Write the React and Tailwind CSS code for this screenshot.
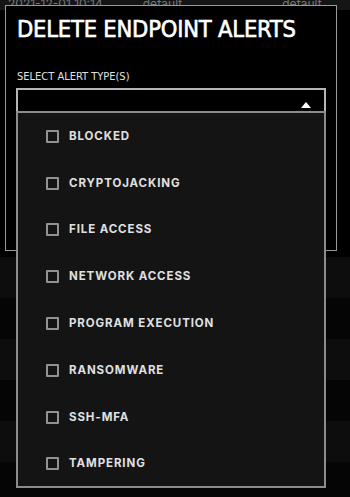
import React from 'react'

const alertTypes = [
  'BLOCKED',
  'CRYPTOJACKING',
  'FILE ACCESS',
  'NETWORK ACCESS',
  'PROGRAM EXECUTION',
  'RANSOMWARE',
  'SSH-MFA',
  'TAMPERING',
]

const bgRows = ['bg-[#0d0d0d]', 'bg-[#050505]', 'bg-[#0d0d0d]', 'bg-[#050505]', 'bg-[#0d0d0d]', 'bg-[#050505]']

export default function App() {
  return (
    <div className="relative w-[350px] h-[497px] overflow-hidden bg-black font-['Inter','Liberation_Sans',sans-serif]">
      {/* table behind the modal */}
      <div className="h-[16px] bg-[#151515] flex items-end gap-[40px] pl-[8px] text-[12px] text-[#777] leading-[12px] -translate-y-[6px]">
        <span>2021-12-01 10:14</span>
        <span>default</span>
        <span className="ml-[60px]">default</span>
      </div>
      <div className="h-[241px]" />
      {bgRows.map((c, i) => (
        <div key={i} className={`h-[41px] ${c}`} />
      ))}

      {/* modal */}
      <div className="absolute left-[5px] top-[5px] w-[332px] h-[246px] bg-black border border-[#9a9a9a]">
        <div className="px-[11px] pt-[9px]">
          <h2 className="whitespace-nowrap text-[23.5px] leading-[28px] tracking-[-0.2px] text-white font-['DejaVu_Sans',sans-serif] [font-stretch:condensed] [-webkit-text-stroke:0.6px_white]">
            DELETE ENDPOINT ALERTS
          </h2>
          <p className="mt-[28px] whitespace-nowrap text-[11px] leading-[12px] text-[#e0e0e0] font-['DejaVu_Sans',sans-serif] [font-stretch:condensed]">
            SELECT ALERT TYPE(S)
          </p>
        </div>
        <div className="absolute right-[8px] top-[209px] w-[4px] h-[27px] border-l-2 border-[#2a7f96]" />
      </div>

      {/* select and open list */}
      <div className="absolute left-[16px] top-[88px] w-[310px]">
        <div className="h-[23px] border-2 border-b-0 border-[#b5b5b5] bg-black flex items-end justify-end pr-[13px] pb-[3px]">
          <svg width="10" height="6" viewBox="0 0 10 6">
            <path d="M0 6 L5 0 L10 6 Z" fill="#ffffff" />
          </svg>
        </div>
        <ul className="h-[377px] border-2 border-[#8c8c8c] bg-[#141414]">
          {alertTypes.map((t) => (
            <li key={t} className="h-[46.8px] flex items-center pl-[28px]">
              <span className="w-[13px] h-[13px] border-2 border-[#929292] rounded-[1px]" />
              <span className="ml-[10px] text-[11.5px] font-bold tracking-[0.9px] text-[#e0e0e0]">{t}</span>
            </li>
          ))}
        </ul>
      </div>
    </div>
  )
}
